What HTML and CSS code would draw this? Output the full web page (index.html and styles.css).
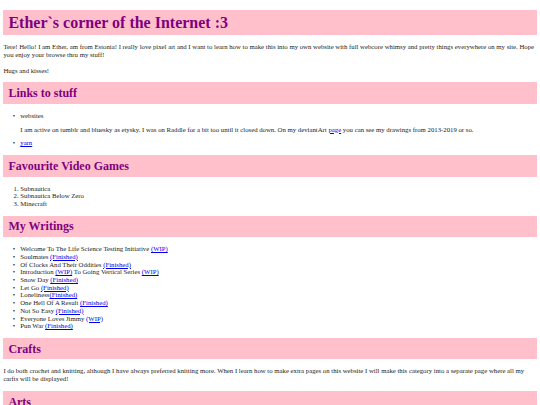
FILE: index.html
```html
<!DOCTYPE html>
<html>
<head>
<meta charset="utf-8">
<title>Ether`s corner of the Internet :3</title>
<link rel="stylesheet" href="styles.css">
</head>
<body>
<h1 class="banner">Ether`s corner of the Internet :3</h1>
<p class="text">Tere! Hello! I am Ether, am from Estonia! I really love pixel art and I want to learn how to make this into my own website with full webcore whimsy and pretty things everywhere on my site. Hope you enjoy your browse thru my stuff!</p>
<p class="text">Hugs and kisses!</p>

<h2 class="section">Links to stuff</h2>
<ul class="list bullets">
  <li>websites
    <p class="note">I am active on tumblr and bluesky as etysky. I was on Raddle for a bit too until it closed down. On my deviantArt <a href="#">page</a> you can see my drawings from 2013-2019 or so.</p>
  </li>
  <li><a href="#">yarn</a></li>
</ul>

<h2 class="section">Favourite Video Games</h2>
<ol class="list">
  <li>Subnautica</li>
  <li>Subnautica Below Zero</li>
  <li>Minecraft</li>
</ol>

<h2 class="section">My Writings</h2>
<ul class="list bullets">
  <li>Welcome To The Life Science Testing Initiative <a href="#">(WIP)</a></li>
  <li>Soulmates <a href="#">(Finished)</a></li>
  <li>Of Clocks And Their Oddities <a href="#">(Finished)</a></li>
  <li>Introduction <a href="#">(WIP)</a> To Going Vertical Series <a href="#">(WIP)</a></li>
  <li>Snow Day <a href="#">(Finished)</a></li>
  <li>Let Go <a href="#">(Finished)</a></li>
  <li>Loneliness<a href="#">(Finished)</a></li>
  <li>One Hell Of A Result <a href="#">(Finished)</a></li>
  <li>Not So Easy <a href="#">(Finished)</a></li>
  <li>Everyone Loves Jimmy <a href="#">(WIP)</a></li>
  <li>Pun War <a href="#">(Finished)</a></li>
</ul>

<h2 class="section">Crafts</h2>
<p class="text">I do both crochet and knitting, although I have always preferred knitting more. When I learn how to make extra pages on this website I will make this category into a separate page where all my carfts will be displayed!</p>

<h2 class="section">Arts</h2>
</body>
</html>
```

FILE: styles.css
```css
html {
  background: #ffffff;
}

body {
  margin: 3.375px;
  font-family: "Liberation Serif", "Times New Roman", serif;
  font-size: 6.75px;
  line-height: 7.7px;
  color: #222222;
}

.banner,
.section {
  background: #ffc0cb;
  color: #800080;
  font-weight: bold;
  font-family: "Liberation Serif", "Times New Roman", serif;
}

.banner {
  font-size: 16px;
  line-height: 18px;
  margin: 7px 0 8px;
  padding: 3.5px 5px;
}

.section {
  font-size: 12px;
  line-height: 14px;
  margin: 8px 0;
  padding: 3.75px 5px;
}

.text {
  margin: 8px 0;
}

.list {
  margin: 8px 0;
  padding-left: 16.875px;
}

.bullets > li::marker {
  content: "\2022\00a0\00a0\00a0";
}

.note {
  margin: 6px 0;
}

a {
  color: #0000ee;
}
```
